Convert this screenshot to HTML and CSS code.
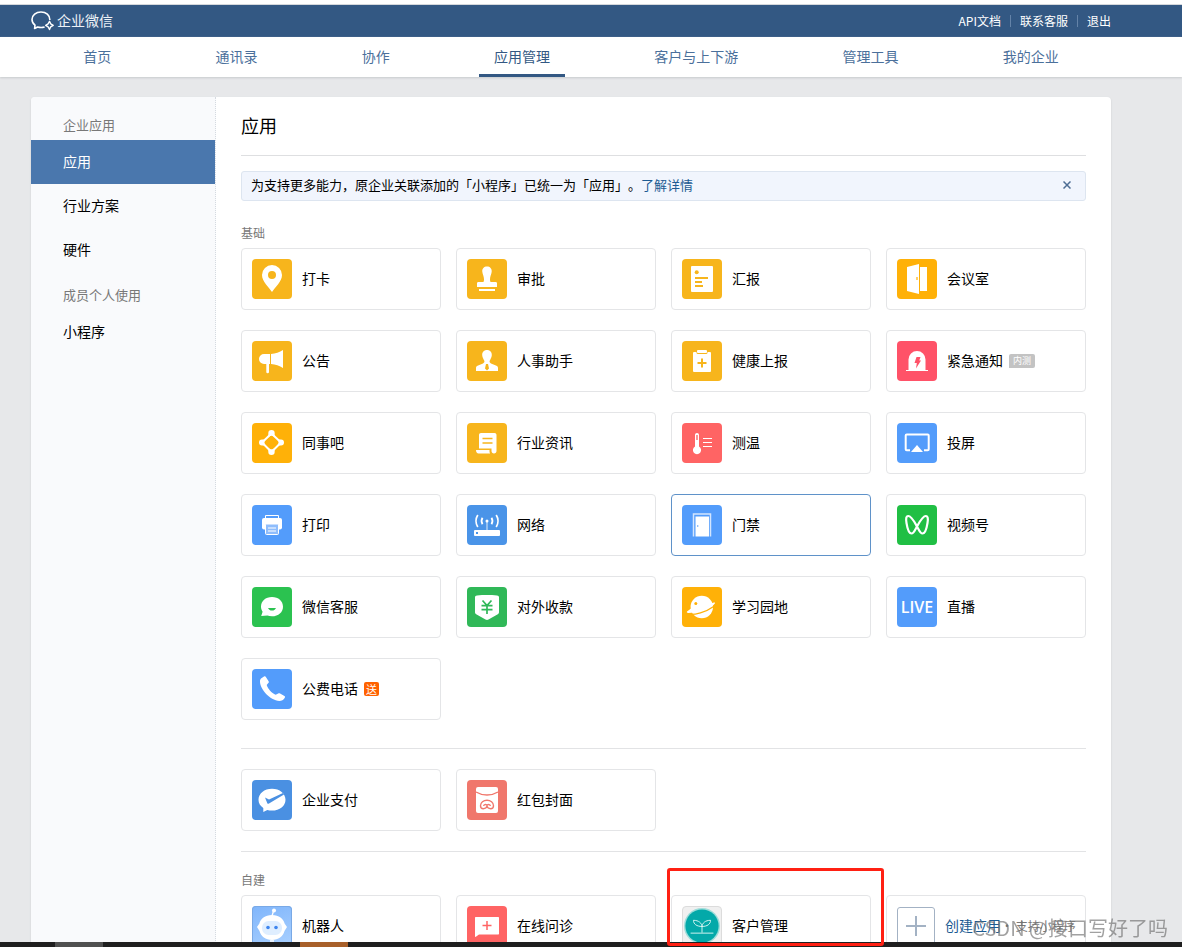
FILE: index.html
```html
<!DOCTYPE html>
<html lang="zh-CN">
<head>
<meta charset="utf-8">
<title>企业微信 - 应用管理</title>
<link rel="stylesheet" href="styles.css">
</head>
<body>
<header class="topbar">
  <a class="brand" href="#">
    <svg class="brand-logo" width="24" height="22" viewBox="0 0 24 22" fill="none" stroke="#fff" stroke-width="1.6" stroke-linejoin="round"><path d="M18.900 10C19 5.200 15 2 10 2S1 5.200 1 9.500c0 2.400 1.200 4.300 3 5.700L3.600 18.500l3-1.500c2.300.7 4.700.7 7 0"/><path d="M18.500 11.300l1.200 2.500 2.500 1.500-2.500 1.500-1.200 2.700-1.400-2.700-2.400-1.500 2.400-1.500z" stroke-width="1.400"/></svg>
    <span>企业微信</span>
  </a>
  <div class="top-links">
    <a href="#">API文档</a><a href="#">联系客服</a><a href="#">退出</a>
  </div>
</header>
<nav class="nav">
  <a href="#">首页</a><a href="#">通讯录</a><a href="#">协作</a><a class="active" href="#">应用管理</a><a href="#">客户与上下游</a><a href="#">管理工具</a><a href="#">我的企业</a>
</nav>
<div class="panel">
  <aside class="side">
    <h2 class="side-title">企业应用</h2>
    <a class="side-item active" href="#">应用</a>
    <a class="side-item" href="#">行业方案</a>
    <a class="side-item" href="#">硬件</a>
    <h2 class="side-title">成员个人使用</h2>
    <a class="side-item" href="#">小程序</a>
  </aside>
  <main class="content">
    <h1 class="title">应用</h1>
    <div class="notice">
      <p>为支持更多能力，原企业关联添加的「小程序」已统一为「应用」。<a href="#">了解详情</a></p>
      <button class="close" type="button" aria-label="关闭"><svg width="8" height="8" viewBox="0 0 8 8" stroke="#4d6d94" stroke-width="1.500"><path d="M.5.5l7 7M7.500.5l-7 7"/></svg></button>
    </div>

    <section class="group">
      <h3 class="group-title">基础</h3>
      <div class="grid">
        <a class="card" href="#"><svg class="icon amber" viewBox="0 0 40 40"><path fill="#fff" fill-rule="evenodd" d="M20 33C17 28.500 10 22.500 10 16a10 10 0 0120 0c0 6.500-7 12.500-10 17zM20 12a4 4 0 100 8 4 4 0 000-8z"/></svg><span class="name">打卡</span></a>
        <a class="card" href="#"><svg class="icon amber" viewBox="0 0 40 40" fill="#fff"><path d="M20 7.500c3 0 5 2 4.700 5.200-.2 2.500-1.700 4.500-1.700 7.500 0 2 .4 2.800 1.200 2.800h4.300c1 0 1.500.5 1.500 1.500V28H10v-3.500c0-1 .5-1.500 1.500-1.500h4.300c.8 0 1.200-.8 1.200-2.800 0-3-1.500-5-1.700-7.500-.3-3.200 1.700-5.200 4.700-5.200z"/><path d="M12 30h16v2H12z"/></svg><span class="name">审批</span></a>
        <a class="card" href="#"><svg class="icon amber" viewBox="0 0 40 40"><rect x="9" y="7" width="22" height="26" rx="1" fill="#fff"/><circle cx="14.700" cy="13.300" r="2" fill="#f7b51c"/><path d="M13 19h13M13 23h7M13 27h8" stroke="#f7b51c" stroke-width="2"/></svg><span class="name">汇报</span></a>
        <a class="card" href="#"><svg class="icon orange" viewBox="0 0 40 40" fill="#fff"><path d="M10 8l12-3v30l-12-3zM23 8h7v24h-7z"/><path d="M20 18v3" stroke="#ffb108" stroke-width="1.200"/></svg><span class="name">会议室</span></a>
        <a class="card" href="#"><svg class="icon amber" viewBox="0 0 40 40" fill="#fff"><path d="M18 13v10h-1v8a1.300 1.300 0 01-2.700 0v-8H12a5 5 0 010-10zM19 13c4.500-.3 8.500-1.700 12-4v18c-3.500-2.300-7.500-3.700-12-4z"/></svg><span class="name">公告</span></a>
        <a class="card" href="#"><svg class="icon amber" viewBox="0 0 40 40" fill="#fff"><path d="M20 9c3 0 5 2.200 4.800 5.200-.2 2.400-1.500 4-2.100 5.600-.4 1.200 0 2 1.300 2.600l5.500 2.400c1.200.5 1.500 1.200 1.500 2.500V30H9v-2.700c0-1.300.3-2 1.500-2.500l5.500-2.400c1.300-.6 1.700-1.400 1.300-2.600-.6-1.600-1.900-3.200-2.100-5.600C15 11.200 17 9 20 9z"/><path d="M19 23h2l1 4.500-2 2-2-2z" fill="#f7b51c"/></svg><span class="name">人事助手</span></a>
        <a class="card" href="#"><svg class="icon amber" viewBox="0 0 40 40"><rect x="11" y="11" width="18" height="20" rx="1" fill="#fff"/><rect x="14.500" y="8.500" width="11" height="4.500" rx="1.500" fill="#f7b51c"/><rect x="15" y="9" width="10" height="3" rx="1" fill="#fff"/><path d="M20 17.500v9M15.500 22h9" stroke="#f7b51c" stroke-width="2"/></svg><span class="name">健康上报</span></a>
        <a class="card" href="#"><svg class="icon rose" viewBox="0 0 40 40" fill="#fff"><path d="M11.500 29V18.500a8.500 8.500 0 0117 0V29H31v1H9v-1z"/><path d="M19.500 16h4l-1.200 3.600h1.700L19 27.500l.8-5.400h-2.300z" fill="#ff5268"/></svg><span class="name">紧急通知</span><span class="tag-beta">内测</span></a>

        <a class="card" href="#"><svg class="icon orange" viewBox="0 0 40 40" fill="#fff"><path d="M19.500 10.500l9.500 9-9.500 9.500-9.500-9.500z" fill="none" stroke="#fff" stroke-width="2"/><path d="M19.500 7a3.200 3.200 0 013.200 3.200c0 1.800-.7 2.800 1.800 5l-3-1.900c-1.300-.8-2.700-.8-4 0l-3 1.900c2.500-2.200 1.800-3.200 1.800-5A3.200 3.200 0 0119.500 7zM19.500 32a3.200 3.200 0 003.200-3.200c0-1.800-.7-2.800 1.800-5l-3 1.900c-1.300.8-2.700.8-4 0l-3-1.900c2.500 2.200 1.800 3.200 1.800 5a3.200 3.200 0 003.200 3.200zM7 19.500a3 3 0 003 3c2 0 3-.5 4.800 1.500L13 21.500c-.7-1.300-.7-2.700 0-4l1.800-2.500c-1.800 2-2.800 1.500-4.800 1.500a3 3 0 00-3 3zM32 19.500a3 3 0 01-3 3c-2 0-3-.5-4.800 1.500l1.800-2.500c.7-1.300.7-2.700 0-4L24.200 15c1.800 2 2.800 1.500 4.800 1.500a3 3 0 013 3z"/></svg><span class="name">同事吧</span></a>
        <a class="card" href="#"><svg class="icon amber" viewBox="0 0 40 40" fill="#fff"><path d="M14 10h13.500c1.200 0 2 .8 2 2v16c0 1.500-1 2.500-2.500 2.500s-2.500-1-2.500-2.500v-2.500H12V12c0-1.200.8-2 2-2z"/><path d="M9 27h13.500v1.500c0 .8.2 1.500.6 2H11.500C10 30.500 9 29 9 27z"/><path d="M15.500 15.500h10M15.500 20h10" stroke="#f7b51c" stroke-width="1.600"/></svg><span class="name">行业资讯</span></a>
        <a class="card" href="#"><svg class="icon coral" viewBox="0 0 40 40" fill="#fff"><path fill-rule="evenodd" d="M15 10c1.200 0 2 .8 2 2v11.500a4.100 4.100 0 11-4 0V12c0-1.200.8-2 2-2zm-.7 2v5h1.400v-5z"/><path d="M21 15.500h9M21 19.500h9M21 23.500h9" stroke="#fff"/></svg><span class="name">测温</span></a>
        <a class="card" href="#"><svg class="icon blue" viewBox="0 0 40 40"><path d="M13 27.300H9.700c-.7 0-1-.4-1-1V12.500c0-.7.300-1 1-1h21c.7 0 1 .3 1 1v13.800c0 .6-.3 1-1 1H27" fill="none" stroke="#fff" stroke-width="2"/><path d="M20 22l6 7H14z" fill="#fff"/></svg><span class="name">投屏</span></a>

        <a class="card" href="#"><svg class="icon blue" viewBox="0 0 40 40"><path d="M13.500 14v-3.500h13V14" fill="none" stroke="#fff"/><rect x="10" y="13" width="20" height="11.500" rx="2" fill="#fff"/><rect x="13.500" y="19" width="13" height="10.500" rx="1" fill="#8fbdfc" stroke="#fff"/><path d="M16 23h8M16 26h8" stroke="#fff"/></svg><span class="name">打印</span></a>
        <a class="card" href="#"><svg class="icon azure" viewBox="0 0 40 40"><rect x="7" y="25" width="26" height="6" rx="1" fill="#fff"/><path d="M9 27h2v2H9z" fill="#4a94e8"/><path d="M20 17v8" stroke="#bcd8f7" stroke-width="1.300"/><circle cx="20" cy="16" r="1.500" fill="#fff"/><path d="M15.500 12.800c-1.200 2-1.200 4.400 0 6.400M24.500 12.800c1.200 2 1.200 4.400 0 6.400M10.800 10c-2.300 3.500-2.300 8.500 0 12M29.200 10c2.300 3.500 2.300 8.500 0 12" fill="none" stroke="#fff" stroke-width="1.800"/></svg><span class="name">网络</span></a>
        <a class="card hover" href="#"><svg class="icon blue" viewBox="0 0 40 40"><path d="M11.500 31.500V9h17v22.500" fill="none" stroke="#d3e5fe" stroke-width="1.500"/><path d="M13.500 11.500H27v20H13.500z" fill="#fff"/><circle cx="15.700" cy="21" r=".8" fill="#539cfb"/></svg><span class="name">门禁</span></a>
        <a class="card" href="#"><svg class="icon green" viewBox="0 0 40 40"><path d="M20 21.500C17.500 17 14.500 11 11.200 11 9 11 8.800 14 9.500 18c.7 4.500 2.200 10.500 5 10.500 2.300 0 3.500-3.500 5.500-7S25.500 11 28.800 11c2.200 0 2.400 3 1.700 7-.7 4.500-2.200 10.500-5 10.500-2.300 0-3.500-3.500-5.500-7z" fill="none" stroke="#fff" stroke-width="2.200"/></svg><span class="name">视频号</span></a>

        <a class="card" href="#"><svg class="icon leaf" viewBox="0 0 40 40"><path d="M20 10c6.500 0 11 4.200 11 9.700S26.500 29.300 20 29.300c-1.700 0-3.200-.3-4.600-.8L9.200 29l1.400-4.300C9.600 23.200 9 21.500 9 19.700 9 14.200 13.500 10 20 10z" fill="#fff"/><path d="M16 21h8c-.8 1.700-2.200 2.600-4 2.600S16.800 22.700 16 21z" fill="#2bc250"/></svg><span class="name">微信客服</span></a>
        <a class="card" href="#"><svg class="icon jade" viewBox="0 0 40 40"><path d="M10 8.500c6.500-.6 13.500-.6 20 0 1.300.1 2 .8 2 2V25c0 1-.3 1.700-1.200 2.300L21.500 32.500c-1 .6-2 .6-3 0l-9.300-5.200C8.300 26.700 8 26 8 25V10.500c0-1.200.7-1.900 2-2z" fill="#fff"/><path d="M15.500 13.500l4.500 5 4.500-5M20 18.500V27M14.500 18.700h11M14.500 22.700h11" fill="none" stroke="#30b858" stroke-width="1.700"/></svg><span class="name">对外收款</span></a>
        <a class="card" href="#"><svg class="icon orange" viewBox="0 0 40 40"><circle cx="19.800" cy="20" r="11.200" fill="#fff"/><path d="M4.500 27c8 1.800 20-2.300 27.500-7.800" fill="none" stroke="#ffb108" stroke-width="1.300"/><path d="M11 20l-6 4.500c-.5.700 0 1.500 1.500 1.400 8.500-.3 18.500-3.400 25-8 2.700-2.200 2-2.900-.8-1.900" fill="#fff"/><circle cx="13.800" cy="16.500" r="1.500" fill="#ffb108"/></svg><span class="name">学习园地</span></a>
        <a class="card" href="#"><span class="icon blue live">LIVE</span><span class="name">直播</span></a>

        <a class="card" href="#"><svg class="icon blue" viewBox="0 0 40 40"><path d="M9 9.500l3-2c.8-.5 1.500-.3 1.900.4l2.700 4.300c.4.7.3 1.300-.3 1.900l-1.600 1.800c1.300 4 4.800 7.800 9 9.800l2.500-1.300c.7-.4 1.300-.3 1.900.1l4.300 2.600c.7.400.8 1 .4 1.700C31.500 31 29.500 32 27.500 32 17.500 31 8.500 20.500 8 13c-.1-1.500.2-2.700 1-3.500z" fill="#fff"/></svg><span class="name">公费电话</span><span class="tag-gift">送</span></a>
      </div>
    </section>

    <section class="group divided">
      <div class="grid">
        <a class="card" href="#"><svg class="icon ocean" viewBox="0 0 40 40"><path d="M20 8.700c7.700 0 13.500 4.800 13.500 11S27.700 30.600 20 30.600c-1.700 0-3.200-.2-4.700-.6L11.300 32v-4C8.300 26 6.500 23 6.500 19.700c0-6.200 5.800-11 13.500-11z" fill="#fff"/><path d="M13 17.500l4 2L31 13l1 1.500-15 9c-.7.500-1.300.4-1.700-.3z" fill="#4a90e2"/></svg><span class="name">企业支付</span></a>
        <a class="card" href="#"><svg class="icon salmon" viewBox="0 0 40 40"><rect x="9" y="7" width="22" height="26" rx="2" fill="#fff"/><g fill="none" stroke="#f0776c" stroke-width="1.400"><path d="M9 12c6.500 4 15.500 4 22 0"/><path d="M20 25v1.200c-.5 2-2.200 2.500-3.700 2.500-1.700 0-2.800-1.200-2.800-3 0-3.200 3-5.500 6.500-5.500s6.500 2.300 6.500 5.500c0 1.800-1.100 3-2.800 3-1.500 0-3.200-.5-3.700-2.500M20 25c-1.500-.8-3.300-.6-3.300 1M20 25c1.500-.8 3.300-.6 3.300 1"/></g></svg><span class="name">红包封面</span></a>
      </div>
    </section>

    <section class="group divided">
      <h3 class="group-title">自建</h3>
      <div class="grid">
        <a class="card" href="#"><svg class="icon sky" viewBox="0 0 40 40"><path d="M20 10l1.500-5" stroke="#fff" stroke-width="1.300"/><circle cx="22" cy="4.500" r="2" fill="#fff"/><path d="M20 9c7 0 11.500 3.700 12.600 8.500L35 21l-2.500 4C31 30.500 26.500 34 20 34S9 30.500 7.500 25L5 21l2.400-3.500C8.500 12.700 13 9 20 9z" fill="#fff"/><rect x="10" y="15" width="20" height="14" rx="6.500" fill="#dfeeff"/><circle cx="16" cy="21.500" r="1.800" fill="#3f86ef"/><circle cx="24" cy="21.500" r="1.800" fill="#3f86ef"/><path d="M18 34h4v6h-4z" fill="#e9f3ff"/></svg><span class="name">机器人</span></a>
        <a class="card" href="#"><svg class="icon coral" viewBox="0 0 40 40"><path d="M9 11h22c.7 0 1 .3 1 1v15.500c0 .7-.3 1-1 1H12L8.500 31c-.3 0-.5-.2-.5-.5V12c0-.7.300-1 1-1z" fill="#fff"/><path d="M20 15v9M15.500 19.500h9" stroke="#ff6464" stroke-width="1.500"/></svg><span class="name">在线问诊</span></a>
        <a class="card marked" href="#"><svg class="icon mist" viewBox="0 0 40 40"><circle cx="20" cy="20" r="19" fill="#9eddda"/><circle cx="20" cy="20" r="17.500" fill="#03a9a9"/><path d="M20 27v-6c0-4-3.500-7-9-7 0 4 3.500 6.500 9 6.500M20 21c0-4 3.500-7 9-7 0 4-3.500 6.500-9 6.500M8 27.500h24" fill="none" stroke="#d8f5f3"/></svg><span class="name">客户管理</span></a>
        <a class="card create" href="#"><svg class="plus" viewBox="0 0 38 38" stroke="#a3b2c4"><rect x=".5" y=".5" width="37" height="37" rx="2.500" fill="#fff"/><path d="M19 9v20M9 19h20" stroke-width="2"/></svg><span class="name">创建应用</span><small>· 支持小程序</small></a>
      </div>
    </section>
  </main>
</div>
<div class="taskbar"><i class="task-idle"></i><i class="task-alert"></i></div>
<div class="watermark">CSDN @接口写好了吗</div>
</body>
</html>
```

FILE: styles.css
```css
* { box-sizing: border-box; }
html, body { height: 100%; }
body {
  margin: 0;
  padding-top: 4px;
  overflow: hidden;
  background: #e7e8ea;
  color: #000;
  font: 14px/20px "Noto Sans CJK SC", sans-serif;
  text-spacing-trim: space-all;
  box-shadow: inset 0 4px #fff;
}
h1, h2, h3, p { margin: 0; font-weight: 400; }
a { color: inherit; text-decoration: none; }

.topbar {
  display: flex;
  align-items: center;
  justify-content: space-between;
  height: 33px;
  padding: 0 71px 0 31px;
  border-top: 1px solid #d5d8dc;
  background: #335883;
  color: #fff;
}
.brand { display: flex; align-items: center; gap: 2px; color: #eef2f7; }
.brand span { padding-bottom: 2px; }
.top-links { display: flex; font-size: 12px; line-height: 12px; }
.top-links a + a { margin-left: 9px; padding-left: 9px; border-left: 1px solid #6483a8; }

.nav {
  display: flex;
  justify-content: space-around;
  height: 40px;
  padding: 0 71px 0 31px;
  background: #fff;
  box-shadow: 0 1px 2px #c8cacd;
  color: #4b709b;
  line-height: 38px;
}
.nav a { padding: 0 15px; }
.nav .active { border-bottom: 3px solid #335883; color: #335883; }

.panel {
  display: flex;
  margin: 20px 71px 0 31px;
  border-radius: 4px 4px 0 0;
  background: #fff;
  box-shadow: 0 1px 2px #c8cacd;
}
.side {
  width: 185px;
  flex: none;
  padding-top: 5px;
  border-right: 1px dotted #d5dae0;
  border-radius: 4px 0 0 0;
  background: #f9fafc;
}
.side-title { padding: 13px 0 5px 32px; color: #787878; font-size: 13px; }
.side-item { display: block; padding: 0 0 2px 32px; line-height: 42px; }
.side-item.active { background: #4a77ad; color: #fff; }

.content { flex: 1; min-width: 0; padding: 0 25px; }
.title {
  height: 59px;
  border-bottom: 1px solid #dedfe1;
  font-size: 18px;
  line-height: 56px;
}
.notice {
  display: flex;
  align-items: center;
  justify-content: space-between;
  margin-top: 15px;
  padding: 3px 14px 5px 9px;
  border: 1px solid #dde5f0;
  border-radius: 3px;
  background: #f1f5fd;
  font-size: 13px;
}
.notice a { color: #1c5b92; }
.close { display: flex; padding: 0; border: 0; background: none; }

.group { padding: 22px 0 28px; }
.group.divided { padding: 20px 0; border-top: 1px solid #e2e3e5; }
.group-title { margin-bottom: 5px; color: #787878; font-size: 12px; }
.divided .group-title { margin-top: -2px; margin-bottom: 5px; }
.grid { display: grid; grid-template-columns: repeat(4, minmax(0, 1fr)); gap: 20px 15px; }
.card {
  position: relative;
  display: flex;
  align-items: center;
  gap: 10px;
  height: 62px;
  padding: 0 10px;
  border: 1px solid #e4e5e7;
  border-radius: 4px;
  background: #fff;
  white-space: nowrap;
}
.card.hover { border-color: #5f92c9; }
.name { padding-bottom: 2px; }
.icon { width: 40px; height: 40px; flex: none; border-radius: 4px; }
.amber { background: #f7b51c; }
.orange { background: #ffb108; }
.rose { background: #ff5268; }
.coral { background: #ff6464; }
.blue { background: #539cfb; }
.azure { background: #4a94e8; }
.ocean { background: #4a90e2; }
.green { background: #20bf44; }
.leaf { background: #2bc250; }
.jade { background: #30b858; }
.salmon { background: #f0776c; }
.sky { background: linear-gradient(160deg, #7fb5fb, #a9d0ff); box-shadow: inset 0 0 0 1px #79a9e6; }
.mist { background: #f0f0f0; border: 1px solid #dcdcdc; }
.live {
  color: #fff;
  font: 600 16px/40px "Open Sans", sans-serif;
  text-align: center;
}
.tag-beta, .tag-gift {
  margin-left: -4px;
  border-radius: 2px;
  color: #fff;
  line-height: 14px;
}
.tag-beta { padding: 0 4px; background: #c3c3c3; border-bottom-left-radius: 0; font-size: 9px; }
.tag-gift { padding: 0 2px; background: #ff6200; font-size: 11px; }

.create { gap: 0; }
.create .name { margin-left: 10px; color: #1c5b92; }
.create small { color: #787878; font-size: 12px; }
.plus { width: 38px; height: 38px; flex: none; }

/* Annotation frame around the highlighted app */
.marked::after {
  content: "";
  position: absolute;
  z-index: 3;
  inset: -28px -14px 10px -5px;
  border: 3px solid #ff2013;
  border-radius: 3px;
  pointer-events: none;
}

.taskbar {
  position: fixed;
  inset: auto 0 0;
  z-index: 2;
  height: 5px;
  background: #1f1f1f;
}
.taskbar i { position: absolute; top: 0; bottom: 0; width: 48px; }
.task-idle { left: 55px; background: #505050; }
.task-alert { left: 300px; background: #a8602a; }
.watermark {
  position: fixed;
  right: 14px;
  bottom: 4px;
  z-index: 1;
  color: rgba(110, 110, 110, .65);
  font-size: 20px;
  line-height: 30px;
  white-space: nowrap;
}
```
